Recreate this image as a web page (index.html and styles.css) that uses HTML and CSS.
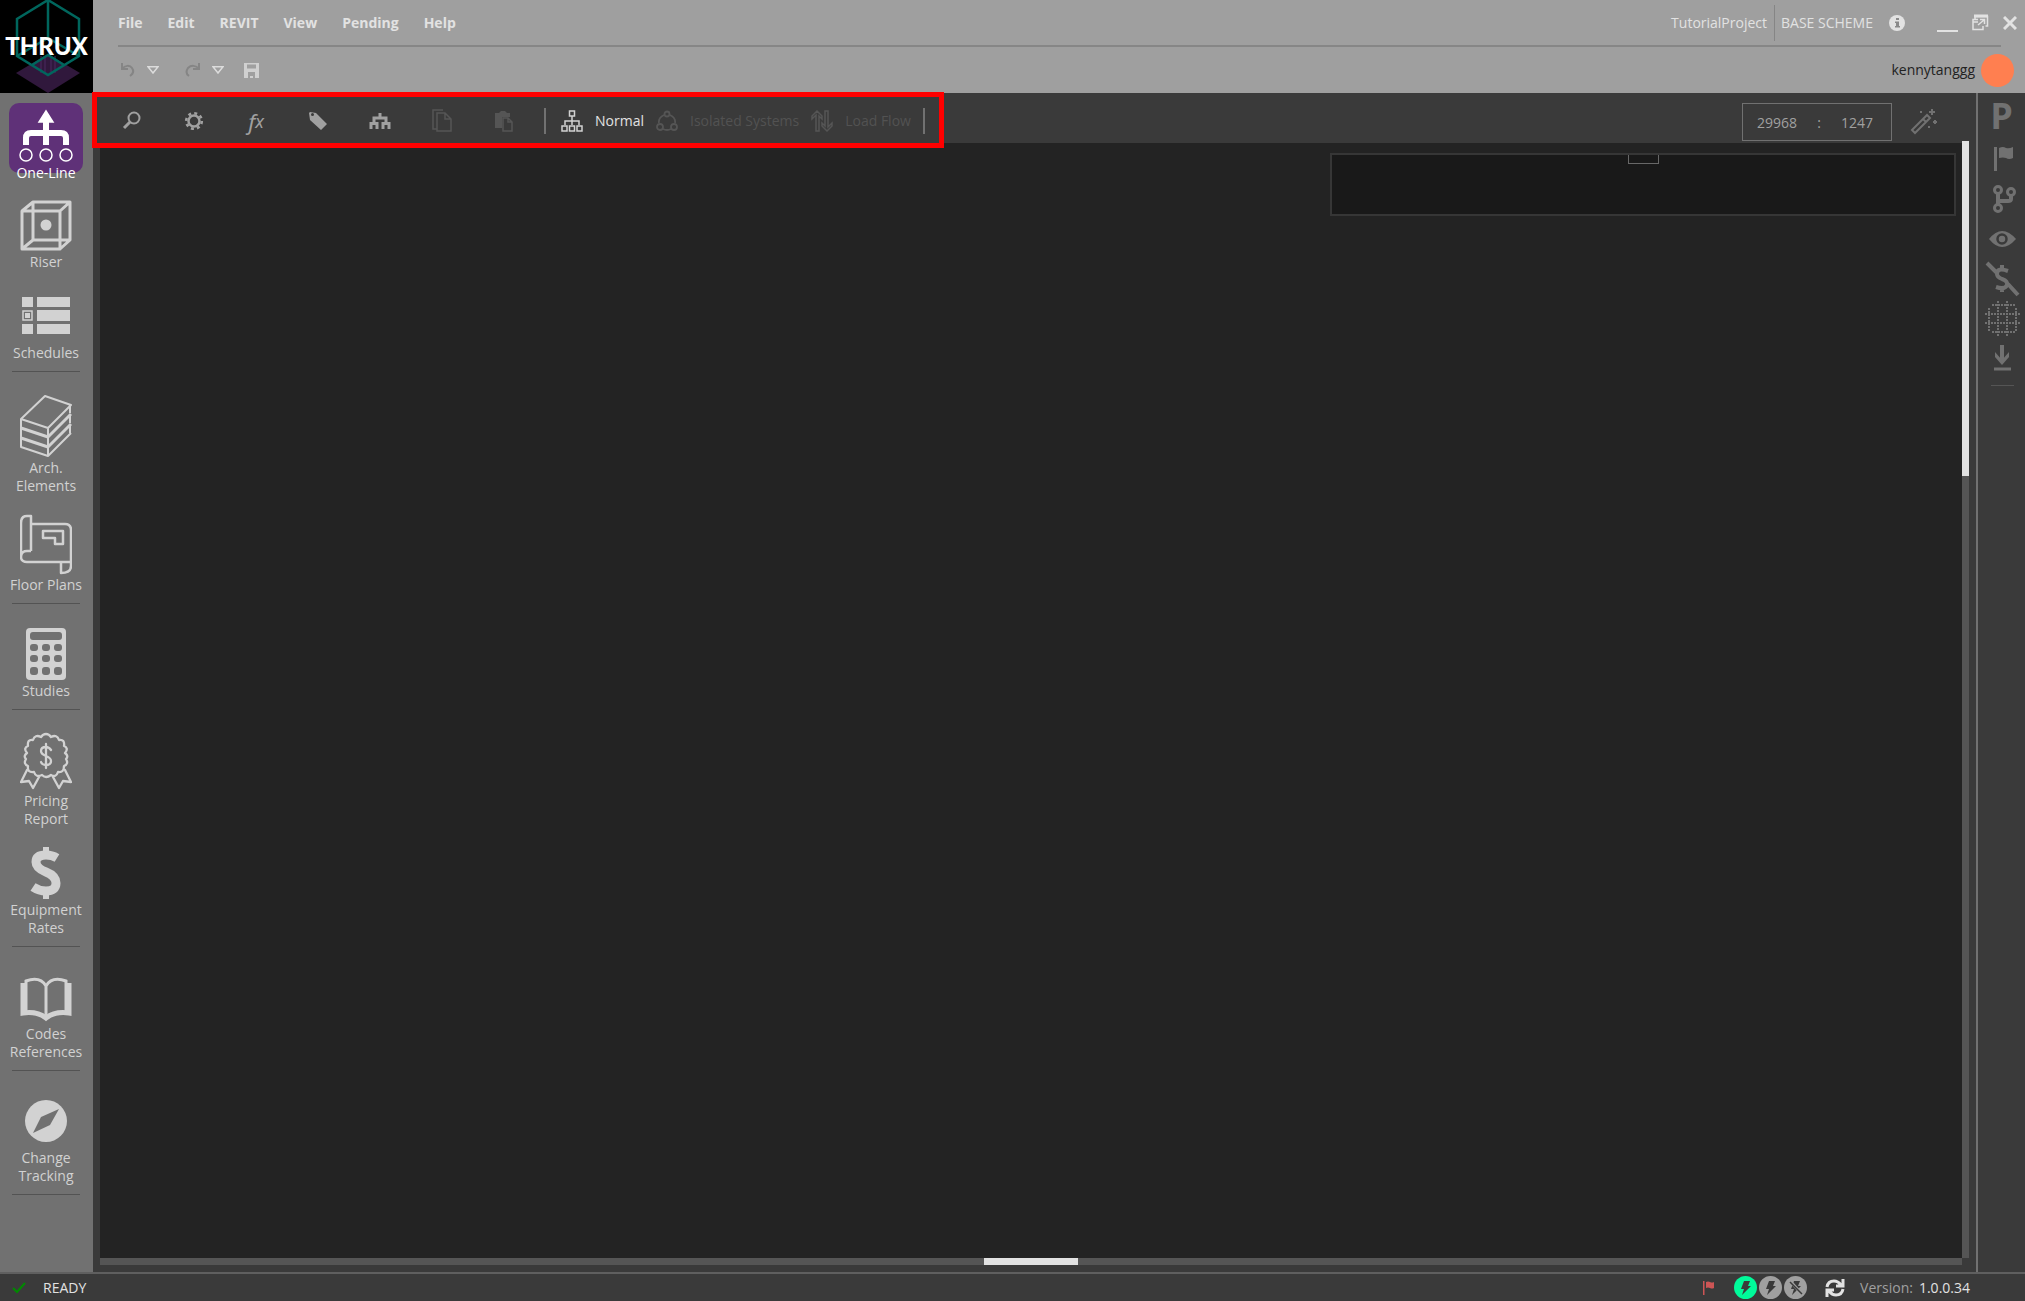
FILE: index.html
```html
<!DOCTYPE html>
<html lang="en">

<head>
    <meta charset="UTF-8">
    <meta name="viewport" content="width=device-width, initial-scale=1.0">
    <title>THRUX - TutorialProject</title>
    <link rel="stylesheet" href="styles.css">
</head>

<body>
    <header class="header">
        <a href="#" class="logo" aria-label="THRUX home">
            <svg viewBox="0 0 93 93">
                <path d="M48 54L80 73L48 93L16 73Z" fill="#30183c" />
                <path d="M41 56v17M45 56v17M51 56v17M55 56v17" stroke="#4a2860" fill="none" />
                <path d="M48 0L79 19V56L48 75L17 56V19ZM48 0V38M48 38L17 56M48 38L79 56M32 65L48 55L64 65" fill="none" stroke="#00665d" stroke-width="2.500" />
            </svg>
            <span class="logo-text">THRUX</span>
        </a>
        <div class="header-rows">
            <div class="title-row">
                <nav class="menu">
                    <button type="button">File</button>
                    <button type="button">Edit</button>
                    <button type="button">REVIT</button>
                    <button type="button">View</button>
                    <button type="button">Pending</button>
                    <button type="button">Help</button>
                </nav>
                <div class="project">
                    <span class="project-name">TutorialProject</span>
                    <span class="scheme-name">BASE SCHEME</span>
                    <button type="button" class="info" aria-label="Information">
                        <svg width="16" height="16"><circle cx="8" cy="8" r="8" fill="#e2e2e2" /><path d="M7 3h3v2H7zM6 6.500h4V11h1v1.500H6V11h1V8H6z" fill="#8a8a8a" /></svg>
                    </button>
                </div>
                <div class="window-buttons">
                    <button type="button" aria-label="Minimize">
                        <svg width="21" height="18"><path d="M0 17h21" stroke="#e2e2e2" stroke-width="2" /></svg>
                    </button>
                    <button type="button" aria-label="Restore">
                        <svg width="17" height="17" fill="none" stroke="#e2e2e2"><path d="M3 2.500h12.500V12h-2M3 1v4" stroke-width="1.500" /><path d="M2 2h14" stroke-width="3" /><path d="M1 9V5.500h5M1 8h5M1 8v7.500h10V12" stroke-width="1.500" /><path d="M6 11l6-5M8 5.500h4.500V10" stroke-width="1.500" /></svg>
                    </button>
                    <button type="button" aria-label="Close">
                        <svg width="14" height="14"><path d="M1 1l12 12M13 1L1 13" stroke="#e2e2e2" stroke-width="3" /></svg>
                    </button>
                </div>
            </div>
            <div class="quick-row">
                <div class="quick-tools">
                    <button type="button" aria-label="Undo">
                        <svg width="16" height="16" fill="none" stroke="#858585" stroke-width="2"><path d="M2 1v6h6M2 7c3-4 8-4 10-1 2 3 1 6-2 8" /></svg>
                    </button>
                    <button type="button" class="drop" aria-label="Undo history">
                        <svg width="12" height="8" fill="none" stroke="#dcdcdc"><path d="M1 .7h10L6 7z" stroke-width="1.500" /></svg>
                    </button>
                    <button type="button" class="redo" aria-label="Redo">
                        <svg width="16" height="16" fill="none" stroke="#858585" stroke-width="2"><path d="M14 1v6H8M14 7C11 3 6 3 3 6c-2 3-2 6 1 8" /></svg>
                    </button>
                    <button type="button" class="drop" aria-label="Redo history">
                        <svg width="12" height="8" fill="none" stroke="#dcdcdc"><path d="M1 .7h10L6 7z" stroke-width="1.500" /></svg>
                    </button>
                    <button type="button" class="save" aria-label="Save">
                        <svg width="15" height="15"><path d="M0 0h15v15H0zM3 1.500v4h9v-4zM4 9v6h2v-2h3v2h2V9z" fill="#d0d0d0" fill-rule="evenodd" /></svg>
                    </button>
                </div>
                <div class="user">
                    <span>kennytanggg</span>
                    <span class="avatar"></span>
                </div>
            </div>
        </div>
    </header>

    <div class="workspace">
        <nav class="sidebar">
            <div class="nav-group first">
                <a href="#" class="nav-item active">
                    <svg class="tile" viewBox="0 0 74 70" fill="none" stroke="#fff"><path d="M37 42V16M17 42V35Q17 30 22 30H52Q57 30 57 35V42" stroke-width="6" /><path d="M37 8L44 19H30Z" fill="#fff" stroke-width="1.500" /><circle cx="17" cy="52" r="6" stroke-width="1.500" /><circle cx="37" cy="52" r="6" stroke-width="1.500" /><circle cx="57" cy="52" r="6" stroke-width="1.500" /></svg>
                    <span>One-Line</span>
                </a>
                <a href="#" class="nav-item">
                    <svg viewBox="0 0 52 64" fill="none" stroke="#d2d2d2"><path d="M2 22H40V60H2ZM2 22L13 13H50V51L40 60M40 22L50 13M13 13V51H50M2 60L13 51" stroke-width="3" stroke-linejoin="round" /><circle cx="26" cy="36" r="5.500" fill="#d2d2d2" stroke="none" /></svg>
                    <span>Riser</span>
                </a>
                <a href="#" class="nav-item">
                    <svg viewBox="0 0 52 64" fill="#d2d2d2"><path d="M2 17h11v10H2zM17 17h33v10H17zM17 30h33v11H17zM2 44h11v10H2zM17 44h33v10H17zM5 33h5v5H5z" /><path d="M3 31h9v9H3z" fill="none" stroke="#d2d2d2" stroke-width="1.500" /></svg>
                    <span>Schedules</span>
                </a>
            </div>
            <div class="nav-group elements">
                <a href="#" class="nav-item">
                    <svg viewBox="0 0 52 64" fill="none" stroke="#d2d2d2" stroke-width="2" stroke-linejoin="round"><path d="M1 24L25 1L51 10L28 33ZM1 24V52L28 61V33M28 61L51 38M50 11V18M50 20V28M50 30V38" /><path d="M1 33L28 42L51 19M1 43L28 52L51 29" stroke-width="3" /></svg>
                    <span>Arch.<br>Elements</span>
                </a>
                <a href="#" class="nav-item floor-plans">
                    <svg viewBox="0 0 52 64" fill="none" stroke="#d2d2d2" stroke-width="2.500" stroke-linejoin="round"><path d="M11 39V4H7Q1 4 1 11V45Q1 50 7 50H41M11 39H7Q1 39 1 45M11 12H45Q51 12 51 18V54Q51 61 41 61V50H51" /><path d="M23 19H43V32H35V26H23Z" /></svg>
                    <span>Floor Plans</span>
                </a>
            </div>
            <div class="nav-group">
                <a href="#" class="nav-item">
                    <svg viewBox="0 0 52 64"><rect x="6" y="10" width="40" height="52" rx="4" fill="#d2d2d2" /><g fill="#717171"><rect x="10" y="14" width="32" height="8" rx="3" /><rect x="10" y="26" width="8" height="7" rx="3" /><rect x="22" y="26" width="8" height="7" rx="3" /><rect x="34" y="26" width="8" height="7" rx="3" /><rect x="10" y="37" width="8" height="7" rx="3" /><rect x="22" y="37" width="8" height="7" rx="3" /><rect x="34" y="37" width="8" height="7" rx="3" /><rect x="10" y="49" width="8" height="8" rx="3" /><rect x="22" y="49" width="8" height="8" rx="3" /><rect x="34" y="49" width="8" height="8" rx="3" /></g></svg>
                    <span>Studies</span>
                </a>
            </div>
            <div class="nav-group pricing">
                <a href="#" class="nav-item">
                    <svg viewBox="0 0 52 64" fill="none" stroke="#d2d2d2" stroke-width="2.300" stroke-linejoin="round" stroke-linecap="round"><path d="M26 6Q29 6 31 9Q37 6 39 12Q45 11 44 18Q49 20 45 25Q49 28 46 31Q49 36 44 38Q44 45 38 44Q36 50 31 47Q26 51 22 47Q16 50 14 44Q7 45 8 38Q3 36 6 31Q3 28 7 25Q3 20 8 18Q7 11 13 12Q15 6 21 9Q23 6 26 6ZM7 42L1 54L9 53L13 60L19 49M45 42L51 54L43 53L39 60L33 49" /><path d="M31 22Q29 19 26 19Q21 19 21 23Q21 26 26 28Q31 30 31 33Q31 37 26 37Q22 37 21 34M26 16V40" /></svg>
                    <span>Pricing<br>Report</span>
                </a>
                <a href="#" class="nav-item">
                    <svg viewBox="0 0 52 64" fill="none" stroke="#d2d2d2"><path d="M37 21Q32 18 26 18Q16 18 16 25Q16 31 26 35Q36 39 36 46Q36 54 26 54Q19 54 13 50" stroke-width="9" /><path d="M26 10V18M26 54V62" stroke-width="6" /></svg>
                    <span>Equipment<br>Rates</span>
                </a>
            </div>
            <div class="nav-group">
                <a href="#" class="nav-item">
                    <svg viewBox="0 0 52 64" fill="none" stroke="#d2d2d2"><path d="M26 23V54M6 52V20Q20 15 26 25Q32 15 46 20V52" stroke-width="3" /><path d="M3 22V52Q17 50 26 57Q35 50 49 52V22" stroke-width="5" /></svg>
                    <span>Codes<br>References</span>
                </a>
            </div>
            <div class="nav-group">
                <a href="#" class="nav-item">
                    <svg viewBox="0 0 52 64"><circle cx="26" cy="36" r="21" fill="#d2d2d2" /><path d="M13 48L21 32L39 24L30 40Z" fill="#717171" /></svg>
                    <span>Change<br>Tracking</span>
                </a>
            </div>
        </nav>

        <main class="editor">
            <div class="toolbar">
                <div class="tools">
                    <button type="button" class="tool" aria-label="Search"><svg width="22" height="22" fill="none" stroke="#a0a0a0"><circle cx="13" cy="8" r="5.500" stroke-width="2" /><path d="M9 12L3 18" stroke-width="3" /></svg></button>
                    <button type="button" class="tool" aria-label="Settings"><svg width="22" height="22" fill="none" stroke="#a0a0a0"><circle cx="11" cy="11" r="5.500" stroke-width="2.500" /><circle cx="11" cy="11" r="7.800" stroke-width="2.600" stroke-dasharray="3 3.126" /></svg></button>
                    <button type="button" class="tool fx" aria-label="Functions">f<sub>x</sub></button>
                    <button type="button" class="tool" aria-label="Tag"><svg width="22" height="22"><path d="M2 3l1-1 6 1 11 11-6 6L3 10zM4 4.500a1.500 1.500 0 103 0a1.500 1.500 0 10-3 0z" fill="#a0a0a0" fill-rule="evenodd" /></svg></button>
                    <button type="button" class="tool" aria-label="Hierarchy"><svg width="22" height="22" fill="none" stroke="#a0a0a0"><path d="M11 3V7M5 13V8H17V13M2 19V13.500H8V19M14 19V13.500H20V19" stroke-width="3" /></svg></button>
                    <button type="button" class="tool" aria-label="Copy" disabled><svg width="22" height="24" fill="none" stroke="#555" stroke-width="1.500"><path d="M12 1H2V20H6M6 4H14L20 10V22H6ZM14 4V10H20" /></svg></button>
                    <button type="button" class="tool" aria-label="Paste" disabled><svg width="22" height="24"><path d="M2 4h4l2-2h4l2 2h3v4H9v11H2z" fill="#555" /><path d="M10 9h5l4 4v9h-9zM15 9v4h4" fill="#3a3a3a" stroke="#555" stroke-width="1.500" /></svg></button>
                    <span class="divider"></span>
                    <button type="button" class="mode current"><svg width="22" height="22" fill="none" stroke="#d2d2d2" stroke-width="1.500"><path d="M8.500 1h5v5h-5zM11 6v9M4 15v-4h14v4M1 16h5v5H1zM8.500 16h5v5h-5zM16 16h5v5h-5z" /></svg>Normal</button>
                    <button type="button" class="mode isolated" disabled><svg width="22" height="22" fill="none" stroke="#555" stroke-width="1.800"><circle cx="11" cy="4" r="2.500" /><circle cx="4" cy="17" r="3" /><circle cx="18" cy="17" r="3" /><path d="M8 5Q2 8 3 13M14 5Q20 8 19 13M7 19Q11 21 15 19" /></svg>Isolated Systems</button>
                    <button type="button" class="mode" disabled><svg width="22" height="22" fill="none" stroke="#555" stroke-width="1.500"><path d="M5 21V5L1 9V6L6 1L11 6V9L8 6V21ZM14 1V16L11 13V16L16 21L21 16V13L17 17V1Z" /></svg>Load Flow</button>
                    <span class="divider last"></span>
                </div>
                <div class="position">
                    <div class="coords"><span>29968</span><span>:</span><span>1247</span></div>
                    <button type="button" class="wand" aria-label="Magic wand"><svg width="28" height="28" fill="none" stroke="#717171"><path d="M2 22L17 7L20 10L5 25ZM13 11L16 14" stroke-width="2" /><path d="M22 1v6M19 4h6M25 12v4M23 14h4" stroke-width="2" /><path d="M10 3h2v2h-2zM18 18h2v2h-2z" fill="#717171" stroke="none" /></svg></button>
                </div>
            </div>
            <div class="canvas-area">
                <div class="canvas">
                    <div class="minimap"><div class="viewport"></div></div>
                </div>
                <div class="scroll-v"><div class="thumb-v"></div></div>
                <div class="scroll-h"><div class="thumb-h"></div></div>
            </div>
        </main>

        <aside class="rail">
            <button type="button" class="letter" aria-label="Panels">P</button>
            <button type="button" aria-label="Flag"><svg width="36" height="36"><path d="M9 6h3v24H9zM14 7q4-2 7 0q3 1 7-1v11q-4 2-7 0q-3-1-7 0z" fill="#717171" /></svg></button>
            <button type="button" aria-label="Branches"><svg width="36" height="36" fill="none" stroke="#717171" stroke-width="3"><circle cx="13" cy="9" r="3.500" /><circle cx="26" cy="11" r="3.500" /><circle cx="13" cy="27" r="3.500" /><path d="M13 13V23M26 15V18Q26 20 23 20H13" stroke-width="4" /></svg></button>
            <button type="button" aria-label="Visibility"><svg width="36" height="36"><path d="M4 18Q17 2 31 18Q17 34 4 18z" fill="#717171" /><circle cx="17" cy="18" r="4.500" fill="none" stroke="#3a3a3a" stroke-width="2.500" /></svg></button>
            <button type="button" aria-label="Hide prices"><svg width="36" height="36" fill="none" stroke="#717171"><path d="M2 2L12 12M23 23L33 34" stroke-width="4" /><path d="M23 10Q12 6 12 13Q12 16 17 18Q23 20 22 24Q20 29 11 26M17 4V9M17 27V31" stroke-width="4" /></svg></button>
            <button type="button" aria-label="Grid"><svg width="36" height="36" fill="none" stroke="#717171" stroke-width="2" stroke-dasharray="2 1"><path d="M13 0V36M22 0V36M0 13H36M0 22H36M4 7V30M31 7V30M7 4H30M7 31H30" /></svg></button>
            <button type="button" aria-label="Download"><svg width="36" height="36" fill="none" stroke="#717171"><path d="M17 4V21" stroke-width="4" /><path d="M10 11V16L17 24L24 16V11L17 19Z" fill="#717171" stroke="none" /><path d="M9 28H26" stroke-width="3" /></svg></button>
            <span class="rail-divider"></span>
        </aside>
    </div>

    <footer class="status-bar">
        <svg width="14" height="12"><path d="M1 6L5 10L13 1" fill="none" stroke="#008a00" stroke-width="2" /></svg>
        <span class="ready">READY</span>
        <div class="status-right">
            <svg class="flag" width="11" height="14" fill="#cd5555"><path d="M0 0h1.500v14H0zM3 1q2-1 4 0q2 1 4 0v6q-2 1-4 0q-2-1-4 0z" /></svg>
            <div class="power">
                <svg width="23" height="23"><circle cx="11.500" cy="11.500" r="11.500" fill="#00fa9a" /><path d="M10 5h6l-2 5h3l-9 9 2-6H7z" fill="#3a3a3a" /></svg>
                <svg width="23" height="23"><circle cx="11.500" cy="11.500" r="11.500" fill="#a0a0a0" /><path d="M10 5h6l-2 5h3l-9 9 2-6H7z" fill="#3a3a3a" /></svg>
                <svg width="23" height="23"><circle cx="11.500" cy="11.500" r="11.500" fill="#a0a0a0" /><path d="M10 5h6l-2 5h3l-9 9 2-6H7z" fill="#3a3a3a" /><path d="M6 5L18 18" stroke="#a0a0a0" stroke-width="3" /><path d="M6 6L18 18" stroke="#3a3a3a" stroke-width="1.500" /></svg>
            </div>
            <button type="button" class="refresh" aria-label="Refresh"><svg width="20" height="20" fill="none" stroke="#e2e2e2" stroke-width="3"><path d="M2 9Q3 3 9 3Q13 3 16 7M18 1V8H11M18 11Q17 17 11 17Q7 17 4 13M2 19V12H9" /></svg></button>
            <span class="version-label">Version:</span>
            <span class="version">1.0.0.34</span>
        </div>
    </footer>
</body>

</html>
```
FILE: styles.css
```css
/* Global Styles */
* {
    box-sizing: border-box;
}

body {
    display: flex;
    flex-direction: column;
    min-height: 100vh;
    margin: 0;
    font-family: "Open Sans", "Segoe UI", sans-serif;
    font-size: 14px;
    line-height: 18px;
    color: #e2e2e2;
    background-color: #3a3a3a;
}

button {
    display: flex;
    align-items: center;
    justify-content: center;
    padding: 0;
    border: none;
    background: none;
    font: inherit;
    color: inherit;
    cursor: pointer;
}

svg {
    display: block;
    flex: none;
}

/* Header */
.header {
    display: flex;
    height: 93px;
    background-color: #9f9f9f;
}

.logo {
    position: relative;
    width: 93px;
    background-color: #000;
    color: #fff;
    text-decoration: none;
}

.logo-text {
    position: absolute;
    top: 34px;
    left: 0;
    width: 100%;
    text-align: center;
    font-family: Lato, sans-serif;
    font-size: 24px;
    line-height: 24px;
    font-weight: 900;
}

.header-rows {
    flex: 1;
    padding-left: 25px;
}

.title-row {
    display: flex;
    align-items: center;
    height: 45px;
    padding-right: 8px;
}

.menu {
    display: flex;
    gap: 25px;
    font-weight: bold;
}

.project {
    display: flex;
    align-items: center;
    margin-left: auto;
}

.project-name {
    padding: 9px 7px 9px 0;
    border-right: 1px solid #858585;
}

.scheme-name {
    margin-left: 6px;
}

.info {
    margin-left: 16px;
}

.window-buttons {
    display: flex;
    align-items: center;
    gap: 14px;
    margin-left: 32px;
}

.quick-row {
    display: flex;
    align-items: center;
    height: 48px;
    margin-right: 24px;
    border-top: 2px solid #868686;
}

.quick-tools {
    display: flex;
    align-items: center;
    padding-left: 2px;
}

.drop {
    margin-left: 11px;
}

.redo {
    margin-left: 26px;
}

.save {
    margin-left: 20px;
}

.user {
    display: flex;
    align-items: center;
    gap: 6px;
    margin-left: auto;
    margin-right: -13px;
    color: #222;
}

.avatar {
    width: 33px;
    height: 33px;
    border-radius: 50%;
    background-color: #ff7f50;
}

/* Workspace */
.workspace {
    display: flex;
    flex: 1;
}

/* Sidebar */
.sidebar {
    width: 93px;
    background-color: #717171;
    padding: 10px 13px 0 12px;
}

.nav-group {
    display: flex;
    flex-direction: column;
    align-items: center;
    gap: 9px;
    margin-top: 14px;
    padding-bottom: 9px;
    border-bottom: 1px solid #535353;
}

.nav-group.first {
    margin-top: 0;
}

.nav-group.elements {
    gap: 17px;
    margin-top: 23px;
}

.nav-group.pricing {
    margin-top: 18px;
}

.nav-item {
    display: flex;
    flex-direction: column;
    align-items: center;
    color: #d2d2d2;
    text-align: center;
    text-decoration: none;
    white-space: nowrap;
}

.nav-item svg {
    width: 52px;
    height: 64px;
}

.nav-item.active {
    margin-bottom: -2px;
    color: #fff;
}

.nav-item .tile {
    width: 74px;
    height: 70px;
    margin-bottom: -9px;
    border-radius: 10px;
    background-color: #5f3178;
}

/* Toolbar */
.editor {
    display: flex;
    flex-direction: column;
    flex: 1;
    min-width: 0;
}

.toolbar {
    display: flex;
    align-items: flex-start;
    justify-content: space-between;
    height: 50px;
}

.tools {
    position: relative;
    z-index: 1;
    display: flex;
    align-items: center;
    height: 56px;
    margin: -1px 0 0 -1px;
    padding: 2px 14px 0 4px;
    border: 5px solid #ff0000;
}

.tool {
    width: 62px;
    height: 36px;
}

.tool.fx {
    font-family: "Noto Sans", "Open Sans", sans-serif;
    font-style: italic;
    font-size: 22px;
    color: #a0a0a0;
}

.fx sub {
    font-size: 18px;
}

.divider {
    width: 2px;
    height: 26px;
    margin-left: 9px;
    margin-right: 15px;
    background-color: #717171;
}

.divider.last {
    margin: 0 0 0 12px;
}

.mode {
    gap: 12px;
    margin-right: 12px;
    color: #525252;
}

.mode:nth-last-child(2) {
    margin-right: 0;
}

.mode.current {
    color: #e2e2e2;
}

.position {
    display: flex;
    align-items: center;
    gap: 18px;
    padding: 10px 38px 0 0;
}

.coords {
    display: flex;
    align-items: center;
    justify-content: space-between;
    width: 150px;
    height: 38px;
    padding: 2px 18px 0 14px;
    border: 1px solid #717171;
    color: #a0a0a0;
}

/* Canvas */
.canvas-area {
    display: grid;
    grid-template-columns: 1fr 7px;
    grid-template-rows: 1fr 7px;
    flex: 1;
    margin: 0 7px 7px 7px;
}

.canvas {
    padding: 10px 6px;
    background-color: #232323;
}

.minimap {
    width: 626px;
    height: 63px;
    margin-left: auto;
    border: 2px solid #363636;
    background-color: #191919;
}

.viewport {
    width: 31px;
    height: 9px;
    margin: 0 auto;
    border: 1px solid #686868;
    border-top: none;
}

.scroll-v {
    margin-top: -2px;
    background-color: #555;
}

.thumb-v {
    height: 30%;
    background-color: #e2e2e2;
}

.scroll-h {
    background-color: #555;
}

.thumb-h {
    width: 5%;
    height: 100%;
    margin: 0 auto;
    background-color: #e2e2e2;
}

/* Right Rail */
.rail {
    display: flex;
    flex-direction: column;
    align-items: center;
    width: 49px;
    padding-top: 6px;
    padding-left: 2px;
    border-left: 2px solid #717171;
}

.rail button {
    width: 36px;
    height: 40px;
}

.rail .letter {
    padding-bottom: 6px;
    padding-right: 2px;
    font-size: 36px;
    line-height: 36px;
    font-weight: bold;
    color: #717171;
}

.rail-divider {
    width: 23px;
    height: 1px;
    margin-top: 6px;
    background-color: #555;
}

/* Status Bar */
.status-bar {
    display: flex;
    align-items: center;
    height: 29px;
    padding: 0 55px 0 12px;
    border-top: 2px solid #5f5f5f;
}

.ready {
    margin-left: 17px;
}

.status-right {
    display: flex;
    align-items: center;
    margin-left: auto;
}

.power {
    display: flex;
    gap: 2px;
    margin-left: 20px;
}

.refresh {
    margin: 0 15px 0 18px;
}

.version-label {
    margin-right: 6px;
    color: #a0a0a0;
}
```
